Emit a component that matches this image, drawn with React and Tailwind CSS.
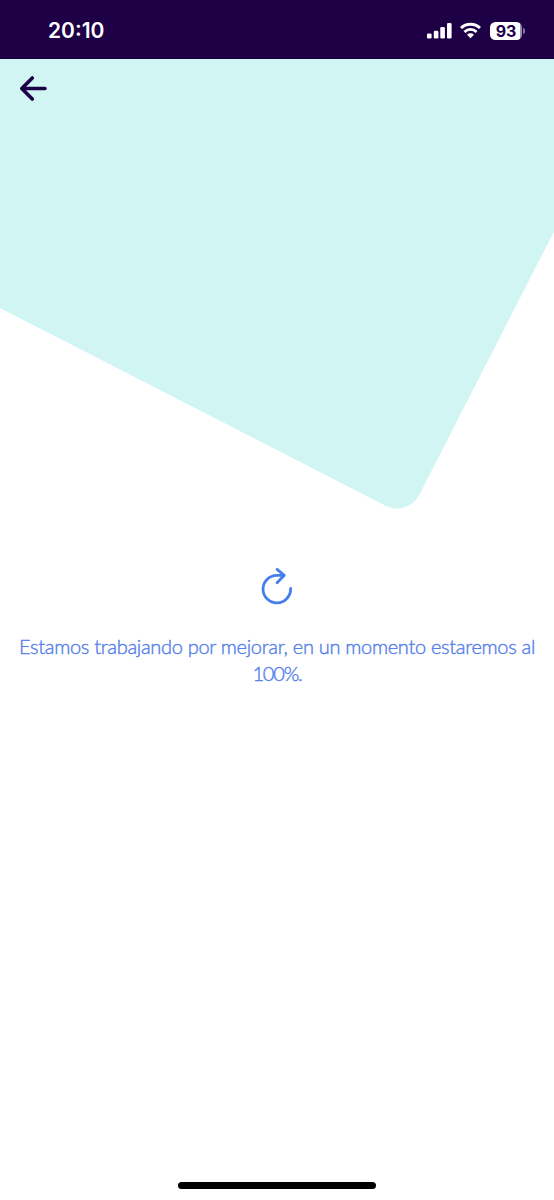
function StatusBar() {
  return (
    <header className="flex h-[59px] shrink-0 items-center justify-between bg-[#1e0047] pr-[29px] pl-[48px] text-white">
      <span className="mt-[2px] font-['Inter',sans-serif] text-[21px] leading-none font-semibold">20:10</span>

      <div className="mt-[2px] flex items-center">
        {/* Señal */}
        <svg width="25" height="17" viewBox="0 0 25 17" fill="currentColor">
          <rect x="0" y="11.5" width="4.6" height="5" rx="1.3" />
          <rect x="6.8" y="8.8" width="4.6" height="7.7" rx="1.3" />
          <rect x="13.3" y="5" width="4.6" height="11.5" rx="1.3" />
          <rect x="20" y="1" width="4.6" height="15.5" rx="1.3" />
        </svg>

        {/* Wifi */}
        <svg className="ml-[8px]" width="21" height="17" viewBox="0 0 21 17" fill="none" stroke="currentColor" strokeWidth="2.8">
          <path d="M1 6.1a13.7 13.7 0 0 1 19 0" />
          <path d="M4.5 9.9a8.6 8.6 0 0 1 12 0" />
          <path d="M10.5 16.2 7 12.7a5 5 0 0 1 7 0Z" fill="currentColor" stroke="none" />
        </svg>

        {/* Batería */}
        <div className="ml-[9px] flex h-[18px] w-[32px] items-center justify-center rounded-[5.5px] bg-[linear-gradient(90deg,#fff_93%,#9b8bb0_93%)] font-['Inter',sans-serif] text-[16px] leading-none font-bold text-[#1e0047]">
          93
        </div>
        <div className="ml-[1px] h-[6px] w-[2px] rounded-r-full bg-[#84729c]"></div>
      </div>
    </header>
  );
}

function App() {
  return (
    <div className="relative flex h-[1200px] w-[554px] flex-col overflow-hidden bg-white">
      <StatusBar />

      {/* Fondo decorativo */}
      <svg className="absolute top-[59px] left-0" width="554" height="460" viewBox="0 59 554 460">
        <path d="M0 59H554V231.5L419.2 494.9A25 25 0 0 1 385.5 505.8L0 308Z" fill="#d0f5f2" />
      </svg>

      <button className="relative mt-[15px] ml-[19px] size-[29px]" aria-label="Volver">
        <svg width="29" height="29" viewBox="0 0 29 29" fill="none" stroke="#1e0047" strokeWidth="3.6" strokeLinecap="round" strokeLinejoin="round">
          <path d="M26 14.5H3M13.3 4 2.8 14.5 13.3 25" />
        </svg>
      </button>

      <main className="mt-[463px] flex flex-col items-center">
        <svg width="34" height="40" viewBox="260 566 34 40" fill="none" stroke="#477eed" strokeWidth="2.8" strokeLinecap="round" strokeLinejoin="round">
          <path d="M290.6 588.5A13.8 13.8 0 1 1 276.8 575.3H284M277.1 569.3 284.3 575.3 277.1 582.7" />
        </svg>
        <p className="mt-[27px] text-center font-['Lato',sans-serif] text-[20px] leading-[27px] font-light tracking-[-0.3px] whitespace-nowrap text-[#5580ea] [-webkit-text-stroke:0.4px_#5580ea]">
          Estamos trabajando por mejorar, en un momento estaremos al
          <br />
          <span className="tracking-[-1.2px]">100%.</span>
        </p>
      </main>

      <div className="mx-auto mt-auto mb-[11px] h-[7px] w-[198px] shrink-0 rounded-full bg-black"></div>
    </div>
  );
}

export default App;
